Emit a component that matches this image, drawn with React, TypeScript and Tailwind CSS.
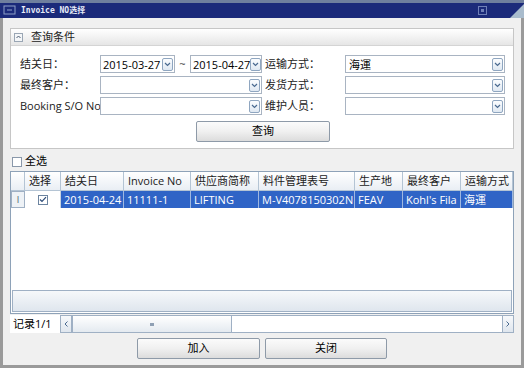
import React from "react";

const ui = { fontFamily: '"Open Sans", "Noto Sans CJK SC", sans-serif' };

const DropBtn = () => (
  <div className="w-[11px] h-[13px] shrink-0 rounded-[2px] border border-[#8fa6c0] bg-gradient-to-b from-[#fbfdff] to-[#dfe8f2] flex items-center justify-center">
    <svg width="7" height="5" viewBox="0 0 7 5">
      <path d="M1 1 L3.5 3.5 L6 1" stroke="#4a6a90" strokeWidth="1.2" fill="none" />
    </svg>
  </div>
);

const Combo = ({ value = "", w }: { value?: string; w: string }) => (
  <div className={`${w} h-[18px] bg-white border border-[#a9b4c2] flex items-center pl-[3px] pr-[1px]`}>
    <span className="flex-1 text-[11px] text-black whitespace-nowrap overflow-hidden leading-[15px]">{value}</span>
    <DropBtn />
  </div>
);

const Label = ({ children }: { children: React.ReactNode }) => (
  <div className="w-[80px] shrink-0 text-[11px] text-[#222] whitespace-nowrap overflow-hidden leading-[16px]">{children}</div>
);

const cols = [
  { t: "选择", w: "w-[36px]" },
  { t: "结关日", w: "w-[63px]" },
  { t: "Invoice No", w: "w-[67px]" },
  { t: "供应商简称", w: "w-[68px]" },
  { t: "料件管理表号", w: "w-[96px]" },
  { t: "生产地", w: "w-[48px]" },
  { t: "最终客户", w: "w-[58px]" },
  { t: "运输方式", w: "w-[52px]" },
];

const row = ["2015-04-24", "11111-1", "LIFTING", "M-V4078150302N", "FEAV", "Kohl's Fila", "海運"];

const Btn = ({ children, w }: { children: React.ReactNode; w: string }) => (
  <div className={`${w} h-[21px] rounded-[2px] border border-[#8e9aa8] bg-gradient-to-b from-[#fbfbfb] via-[#f0f0f0] to-[#dcdcdc] flex items-center justify-center text-[11px] text-black`}>
    {children}
  </div>
);

export default function App() {
  return (
    <div className="w-[524px] h-[368px] flex flex-col overflow-hidden bg-[#f0f0f0]" style={ui}>
      {/* title bar */}
      <div className="h-[18px] shrink-0 bg-[#1b2a7a] border-t-[3px] border-[#6f7f9e] flex items-center relative">
        <svg width="14" height="11" viewBox="0 0 14 11" className="ml-[3px]">
          <rect x="1" y="1" width="11" height="8" fill="none" stroke="#8fa0c8" />
          <path d="M4 5 H9" stroke="#8fa0c8" />
        </svg>
        <span className="ml-[4px] text-[8px] font-bold text-[#e8ecf8]" style={{ fontFamily: '"DejaVu Sans Mono", "Noto Sans CJK SC", monospace' }}>
          Invoice NO选择
        </span>
        <div className="ml-auto mr-[37px] w-[9px] h-[9px] border border-[#6f7fb8] flex items-center justify-center">
          <div className="w-[3px] h-[3px] bg-[#6f7fb8]" />
        </div>
        <div className="absolute right-0 bottom-0 w-0 h-0 border-l-[14px] border-l-transparent border-b-[14px] border-b-[#a9bccd]" />
      </div>

      {/* body */}
      <div className="flex-1 flex flex-col border-x-[3px] border-b-[3px] border-[#9a9a9a] px-[7px] pt-[10px]">
        {/* query panel */}
        <div className="h-[121px] shrink-0 border border-[#c6c6c6] bg-white flex flex-col">
          <div className="h-[17px] shrink-0 bg-gradient-to-b from-[#ffffff] to-[#e6e6e6] border-b border-[#d4d4d4] flex items-center pl-[3px]">
            <div className="w-[9px] h-[9px] border border-[#9aa6b4] bg-[#f4f6f8] flex items-center justify-center">
              <svg width="5" height="4" viewBox="0 0 5 4">
                <path d="M0.5 3 L2.5 1 L4.5 3" stroke="#4a5a70" fill="none" />
              </svg>
            </div>
            <span className="ml-[8px] text-[11px] text-[#222]">查询条件</span>
          </div>
          <div className="flex flex-col pl-[9px] pt-[9px] gap-[3px]">
            <div className="flex items-center h-[18px]">
              <Label>结关日：</Label>
              <div className="w-[75px] h-[18px] bg-white border border-[#a9b4c2] flex items-center pl-[2px] pr-[1px]">
                <span className="flex-1 text-[11px] leading-[15px] whitespace-nowrap">2015-03-27</span>
                <DropBtn />
              </div>
              <span className="w-[15px] text-center text-[11px] text-[#444]">~</span>
              <div className="w-[72px] h-[18px] bg-white border border-[#a9b4c2] flex items-center pl-[2px]">
                <span className="flex-1 text-[11px] leading-[15px] whitespace-nowrap">2015-04-27</span>
                <DropBtn />
              </div>
              <div className="w-[3px]" />
              <Label>运输方式：</Label>
              <Combo w="w-[160px]" value="海運" />
            </div>
            <div className="flex items-center h-[18px]">
              <Label>最终客户：</Label>
              <Combo w="w-[162px]" />
              <div className="w-[3px]" />
              <Label>发货方式：</Label>
              <Combo w="w-[160px]" />
            </div>
            <div className="flex items-center h-[18px]">
              <Label>Booking S/O No</Label>
              <Combo w="w-[162px]" />
              <div className="w-[3px]" />
              <Label>维护人员：</Label>
              <Combo w="w-[160px]" />
            </div>
            <div className="flex pl-[176px] pt-[3px]">
              <Btn w="w-[134px]">查询</Btn>
            </div>
          </div>
        </div>

        {/* select all */}
        <div className="flex items-center h-[22px] pt-[3px] gap-[3px] pl-[2px]">
          <div className="w-[10px] h-[10px] border border-[#8a98aa] bg-white" />
          <span className="text-[11px] text-black">全选</span>
        </div>

        {/* grid */}
        <div className="h-[143px] shrink-0 border border-[#8ea2b8] bg-white flex flex-col">
          <div className="h-[19px] shrink-0 flex bg-gradient-to-b from-[#ffffff] to-[#e9eef4] border-b border-[#b4c4d4]">
            <div className="w-[14px] shrink-0 border-r border-[#b4c4d4]" />
            {cols.map((c) => (
              <div key={c.t} className={`${c.w} shrink-0 border-r border-[#b4c4d4] flex items-center pl-[4px] text-[11px] text-[#222] whitespace-nowrap overflow-hidden`}>
                {c.t}
              </div>
            ))}
          </div>
          <div className="h-[17px] shrink-0 flex">
            <div className="w-[14px] shrink-0 border border-[#9fb0c4] bg-[#eef2f6] flex items-center justify-center text-[9px] text-[#4a5a70] leading-none">
              I
            </div>
            <div className="w-[36px] shrink-0 flex items-center justify-center bg-white border-r border-[#c8d4e0]">
              <div className="w-[10px] h-[10px] border border-[#6c84a0] bg-white flex items-center justify-center">
                <svg width="8" height="7" viewBox="0 0 8 7">
                  <path d="M1 3.5 L3 5.5 L7 1.2" stroke="#2d4b78" strokeWidth="1.2" fill="none" />
                </svg>
              </div>
            </div>
            <div className="flex-1 flex bg-[#2f64c6]">
              {row.map((v, i) => (
                <div key={i} className={`${cols[i + 1].w} shrink-0 border-r border-[#9fb8e0] flex items-center pl-[3px] text-[11px] text-white whitespace-nowrap overflow-hidden leading-[15px]`}>
                  {v}
                </div>
              ))}
            </div>
          </div>
          <div className="flex-1" />
          <div className="h-[22px] shrink-0 mx-[1px] mb-[1px] border border-[#9fb0c4] bg-gradient-to-b from-[#f6f8fa] to-[#dfe6ee]" />
        </div>

        {/* pager + scrollbar */}
        <div className="h-[18px] shrink-0 flex mt-[1px]">
          <div className="w-[50px] shrink-0 bg-white flex items-center pl-[3px] text-[11px] text-black whitespace-nowrap">记录1/1</div>
          <div className="flex-1 flex border border-[#9fb0c4] bg-white">
            <div className="w-[11px] shrink-0 bg-gradient-to-b from-[#f7f9fb] to-[#dfe6ee] border-r border-[#9fb0c4] flex items-center justify-center">
              <svg width="4" height="6" viewBox="0 0 4 6"><path d="M3.5 0.5 L1 3 L3.5 5.5" stroke="#4a6a90" fill="none" /></svg>
            </div>
            <div className="w-[160px] shrink-0 bg-gradient-to-b from-[#ffffff] to-[#e4eaf0] border-x border-[#9fb0c4] flex items-center justify-center">
              <div className="w-[4px] h-[3px] bg-[#8fa0b4]" />
            </div>
            <div className="flex-1" />
            <div className="w-[11px] shrink-0 bg-gradient-to-b from-[#f7f9fb] to-[#dfe6ee] border-l border-[#9fb0c4] flex items-center justify-center">
              <svg width="4" height="6" viewBox="0 0 4 6"><path d="M0.5 0.5 L3 3 L0.5 5.5" stroke="#4a6a90" fill="none" /></svg>
            </div>
          </div>
        </div>

        {/* buttons */}
        <div className="flex justify-center gap-[5px] mt-[5px]">
          <Btn w="w-[123px]">加入</Btn>
          <Btn w="w-[122px]">关闭</Btn>
        </div>
      </div>
    </div>
  );
}
